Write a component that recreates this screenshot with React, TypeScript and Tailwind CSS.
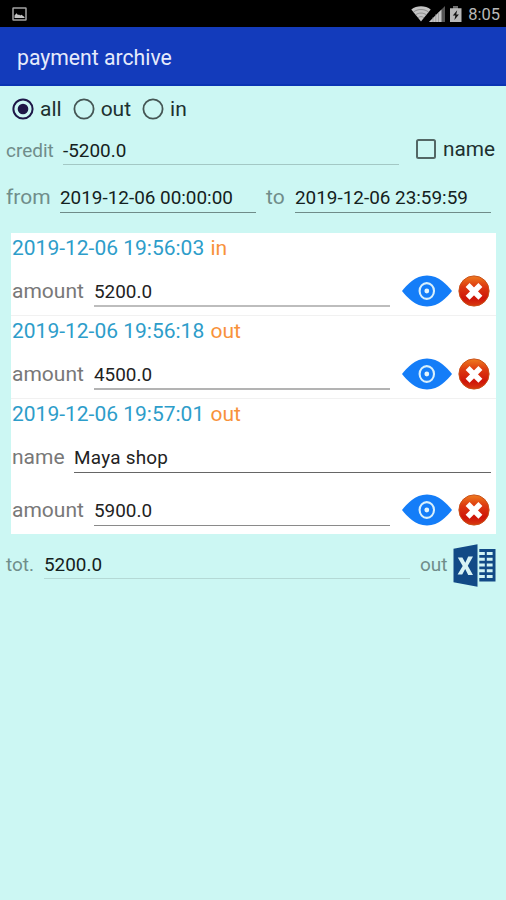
import React from "react";

function StatusBar() {
  return (
    <div className="flex h-[27px] items-center justify-between bg-black pl-[12px] pr-[6px] text-[#b8b8b8]">
      <svg width="15" height="14" viewBox="0 0 15 14">
        <rect x="1" y="1" width="13" height="12" rx="0.5" fill="none" stroke="#a3a3a3" strokeWidth="1.5" />
        <path d="M2.5 11V8.5L4.5 6.2L6 8L7 7.5L8.2 8.6L9.4 7.8L12.5 10V11Z" fill="#c4c4c4" />
      </svg>
      <div className="flex h-[27px] items-center">
        <svg width="53" height="18" viewBox="0 0 53 18">
          <path d="M0.3 4.6C5.5 0.2 14.5 0.2 19.7 4.6L10 16.6Z" fill="#c4c4c4" />
          <path d="M2.5 7C6.5 3.7 13.5 3.7 17.5 7M4.8 9.8C7.5 7.5 12.5 7.5 15.2 9.8M7.2 12.6C8.8 11.3 11.2 11.3 12.8 12.6" fill="none" stroke="#777" strokeWidth="0.7" />
          <path d="M34 1V17H18Z" fill="#555" />
          <path d="M30.5 4.5V17H18Z" fill="#c4c4c4" />
          <path d="M22 12V17M24.8 9V17M27.5 7V17" stroke="#888" strokeWidth="0.6" />
          <path d="M42 1.3H47V3.2H50.5V17H39V3.2H42Z" fill="#b8b8b8" />
          <path d="M42 1.3H47V3.2H42Z" fill="#666" />
          <path d="M46.2 5.2L41.8 10.6H44.4L43.4 15L47.9 9.4H45.2Z" fill="#111" />
        </svg>
        <span className="ml-[4px] pt-px text-[16.5px] leading-[27px]">8:05</span>
      </div>
    </div>
  );
}

function Radio({ label, checked = false }: { label: string; checked?: boolean }) {
  return (
    <div className="flex items-center text-[21px] leading-6 text-[#20302f]">
      <svg width="22" height="22" viewBox="0 0 22 22" className="mr-[6px]">
        <circle cx="11" cy="11" r="9.6" fill="none" stroke={checked ? "#1e1747" : "#455654"} strokeWidth={checked ? 2 : 1.8} />
        {checked && <circle cx="11" cy="11" r="5.3" fill="#1e1747" />}
      </svg>
      {label}
    </div>
  );
}

function Value({ text, className }: { text: string; className: string }) {
  return (
    <div className={`h-[31px] shrink-0 whitespace-pre text-[18.9px] leading-[32px] ${className}`}>{text}</div>
  );
}

function EyeIcon() {
  return (
    <svg width="50" height="32" viewBox="0 0 50 32" className="shrink-0">
      <path d="M0 16C5 10 13 0.5 25 0.5S45 10 50 16C45 22 37 31.5 25 31.5S5 22 0 16Z" fill="#147df8" />
      <ellipse cx="24.8" cy="16" rx="7.2" ry="7.9" fill="none" stroke="#d9f0fc" strokeWidth="2.1" />
      <circle cx="24.8" cy="16" r="2.4" fill="#e4f5fc" />
    </svg>
  );
}

function DeleteIcon() {
  return (
    <svg width="32" height="32" viewBox="0 0 32 32" className="shrink-0">
      <defs>
        <linearGradient id="deleteFill" x1="0" y1="0" x2="0" y2="1">
          <stop offset="0" stopColor="#ef7b1e" />
          <stop offset="0.35" stopColor="#dd3a10" />
          <stop offset="0.75" stopColor="#cf1509" />
          <stop offset="1" stopColor="#d83a10" />
        </linearGradient>
      </defs>
      <circle cx="16" cy="16" r="15.1" fill="url(#deleteFill)" stroke="#c9521b" strokeWidth="1" />
      <path d="M9.6 10L22.4 22.8M22.4 10L9.6 22.8" stroke="#fff" strokeWidth="5.6" />
    </svg>
  );
}

function ExcelIcon() {
  return (
    <svg width="43" height="43" viewBox="0 0 43 43" className="shrink-0">
      <rect x="25" y="5" width="17.5" height="32.5" fill="#124a86" />
      <path
        d="M25 9.4H31.8M33.8 9.4H39.6M25 15.2H31.8M33.8 15.2H39.6M25 21H31.8M33.8 21H39.6M25 26.8H31.8M33.8 26.8H39.6M25 32.6H31.8M33.8 32.6H39.6"
        stroke="#d3f3f4"
        strokeWidth="3"
      />
      <path d="M25 4V39" stroke="#ccf7f3" strokeWidth="2.6" />
      <path d="M0.5 4.8L24.5 0.3V42.7L0.5 38.2Z" fill="#124a86" />
      <path d="M4.8 13.4H9.4L12.3 18.8L15.2 12.6H20L14.8 21.8L20 31H15.2L12.2 25L9.2 30.4H4.6L9.7 21.9Z" fill="#d8f3f5" />
    </svg>
  );
}

type Payment = { date: string; kind: string; name?: string; amount: string; line: string };

const payments: Payment[] = [
  { date: "2019-12-06 19:56:03", kind: "in", amount: "5200.0", line: "border-b-2 border-[#bdbdbd]" },
  { date: "2019-12-06 19:56:18", kind: "out", amount: "4500.0", line: "border-b-2 border-[#b3b3b3]" },
  { date: "2019-12-06 19:57:01", kind: "out", name: "Maya shop", amount: "5900.0", line: "border-b border-[#8a8a8a]" },
];

function PaymentRow({ payment }: { payment: Payment }) {
  return (
    <div className="border-b border-[#f1f1f1] pl-px text-[21px] last:border-b-0">
      <div className="h-[30px] leading-[30px] text-[#2d9dca]">
        {payment.date} <span className="ml-px text-[#f8923b]">{payment.kind}</span>
      </div>
      {payment.name && (
        <div className="flex h-[53px] pt-[13px] leading-[31px] text-[#787878]">
          <span className="w-[62px]">name</span>
          <Value text={payment.name} className="w-[417px] border-b border-[#666] tracking-[0.25px] text-[#222]" />
        </div>
      )}
      <div className="flex h-[52px] pt-[12px] leading-[33px] text-[#787878]">
        <span className="w-[82px] shrink-0">amount</span>
        <Value text={payment.amount} className={`mr-[12px] mt-px w-[296px] text-[#222] ${payment.line}`} />
        <div className="flex gap-[6px]">
          <EyeIcon />
          <DeleteIcon />
        </div>
      </div>
    </div>
  );
}

export default function App() {
  return (
    <div className="h-[900px] w-[506px] overflow-hidden bg-[#ccf7f3] font-['Roboto',sans-serif]">
      <StatusBar />
      <header className="h-[59px] border-b-2 border-[#0a34b4] bg-[#133bbb] pl-[17px] text-[21.2px] leading-[61px] text-[#e6ebfb]">
        payment archive
      </header>
      <div className="flex h-[46px] gap-[11px] pl-[12px]">
        <Radio label="all" checked />
        <Radio label="out" />
        <Radio label="in" />
      </div>
      <div className="flex h-[33px] pl-[6px] text-[19px] leading-[34px] text-[#708d8a]">
        <span className="w-[57px] leading-[37px]">credit</span>
        <Value text="-5200.0" className="mt-[2px] w-[336px] border-b border-[#a3c8c4] pt-px text-[#142120]" />
        <svg width="20" height="20" viewBox="0 0 20 20" className="ml-[17px] mt-[7px]">
          <rect x="1" y="1" width="18" height="18" rx="1.5" fill="none" stroke="#536765" strokeWidth="2" />
        </svg>
        <span className="ml-[7px] text-[20.8px] text-[#20302f]">name</span>
      </div>
      <div className="flex h-[68px] pl-[6px] pt-[17px] text-[21px] leading-[31px] text-[#708d8a]">
        <span className="w-[54px]">from</span>
        <Value text="2019-12-06 00:00:00" className="w-[196px] border-b border-[#6f8c89] text-[#142120]" />
        <span className="w-[39px] pl-[10px]">to</span>
        <Value text="2019-12-06 23:59:59" className="w-[196px] border-b border-[#6f8c89] text-[#142120]" />
      </div>
      <main className="ml-[11px] w-[485px] bg-white">
        {payments.map((p) => (
          <PaymentRow key={p.date} payment={p} />
        ))}
      </main>
      <div className="flex pl-[6px] pt-[10px] text-[19px] leading-[41px] text-[#708d8a]">
        <span className="w-[38px]">tot.</span>
        <Value text="5200.0" className="mt-[4px] w-[366px] border-b border-[#b4d9d5] pt-px text-[#142120]" />
        <span className="w-[43px] pl-[10px]">out</span>
        <ExcelIcon />
      </div>
    </div>
  );
}
